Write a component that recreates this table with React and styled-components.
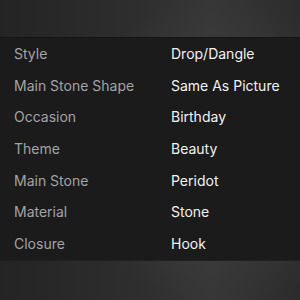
import styled, { createGlobalStyle } from 'styled-components';

const GlobalStyle = createGlobalStyle`
    body {
        margin: 0;
        padding: 0;
        background: #2b2b2b;
    }
`

const specs = [
    ['Style', 'Drop/Dangle'],
    ['Main Stone Shape', 'Same As Picture'],
    ['Occasion', 'Birthday'],
    ['Theme', 'Beauty'],
    ['Main Stone', 'Peridot'],
    ['Material', 'Stone'],
    ['Closure', 'Hook'],
]

const App = () => {
    return (
        <>
            <GlobalStyle />
            <Screen>
                <SpecTable>
                    {specs.map(([label, value]) => (
                        <Row key={label}>
                            <Label>{label}</Label>
                            <Value>{value}</Value>
                        </Row>
                    ))}
                </SpecTable>
            </Screen>
        </>
    )
}

export default App;

const Screen = styled.div`
    width: 300px;
    height: 300px;
    box-sizing: border-box;
    padding-top: 38px;
    background:
        radial-gradient(ellipse 140px 160px at 220px 150px, #424242 0%, rgba(66,66,66,0) 100%),
        linear-gradient(90deg, #242424 0%, #2e2e2e 45%, #363636 70%, #2c2c2c 100%);
    font-family: 'Inter', 'Liberation Sans', sans-serif;
`

const SpecTable = styled.div`
    display: flex;
    flex-direction: column;
    height: 222px;
    background-color: #1b1b1b;
    box-shadow: 0 -1px 0 #151515, 0 1px 0 #202020;
`

const Row = styled.div`
    display: grid;
    grid-template-columns: 157px 1fr;
    align-items: center;
    flex: 1;
    padding-left: 14px;
    font-size: 14px;
    line-height: 1;
`

const Label = styled.span`
    color: #a3a3a3;
`

const Value = styled.span`
    color: #f2f2f2;
`
